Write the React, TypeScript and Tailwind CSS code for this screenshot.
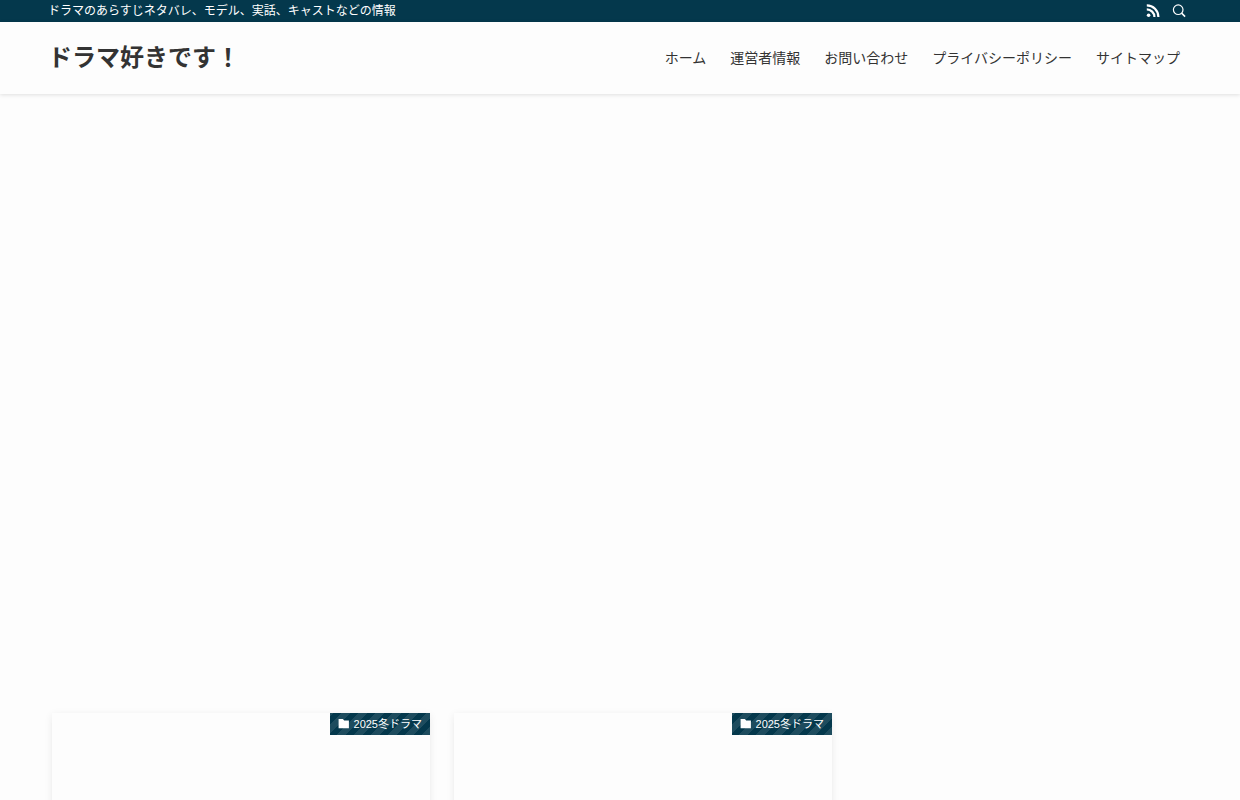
import React from 'react';

const NAV_ITEMS = ['ホーム', '運営者情報', 'お問い合わせ', 'プライバシーポリシー', 'サイトマップ'];

const POSTS = [
  { id: 1, category: '2025冬ドラマ' },
  { id: 2, category: '2025冬ドラマ' },
];

const RssIcon: React.FC = () => (
  <svg viewBox="0 0 14 14" className="w-3.5 h-3.5" fill="none" stroke="currentColor" strokeWidth="2.2" aria-hidden="true">
    <circle cx="2.6" cy="11.2" r="1.8" fill="currentColor" stroke="none" />
    <path d="M0.8 5.4a7.6 7.6 0 0 1 7.6 7.6" />
    <path d="M0.8 1.4a11.6 11.6 0 0 1 11.6 11.6" />
  </svg>
);

const SearchIcon: React.FC = () => (
  <svg viewBox="0 0 14 14" className="w-3.5 h-3.5" fill="none" stroke="currentColor" strokeWidth="1.2" aria-hidden="true">
    <circle cx="6.2" cy="5.7" r="4.8" />
    <path d="M9.6 9.1l3.5 3.5" strokeWidth="1.5" />
  </svg>
);

const FolderIcon: React.FC = () => (
  <svg viewBox="0 0 12 12" className="w-3 h-3" fill="currentColor" aria-hidden="true">
    <path d="M0.6 1h4.2l1.4 1.6h4.7v7.6H0.6z" />
  </svg>
);

const PostCard: React.FC<{ category: string }> = ({ category }) => (
  <li className="flex-1 h-80 shadow-[0_2px_8px_rgba(0,0,0,0.08),0_4px_8px_-4px_rgba(0,0,0,0.04)]">
    <a href="#" className="flex justify-end items-start h-full">
      <span className="flex items-center gap-1 h-[22px] px-2 text-[11px] text-white bg-[#04384c] bg-[repeating-linear-gradient(-45deg,rgba(255,255,255,0.1),rgba(255,255,255,0.1)_6px,transparent_6px,transparent_12px)]">
        <FolderIcon />
        {category}
      </span>
    </a>
  </li>
);

const App: React.FC = () => {
  return (
    <div className="h-screen overflow-hidden bg-[#fdfdfd] text-[#333] font-['Liberation_Sans','Noto_Sans_CJK_JP',sans-serif]">
      <div className="bg-[#04384c] text-white">
        <div className="flex items-center justify-between h-[22px] px-12">
          <p className="text-xs">ドラマのあらすじネタバレ、モデル、実話、キャストなどの情報</p>
          <div className="flex items-center gap-3 pr-1.5">
            <a href="#" aria-label="RSS"><RssIcon /></a>
            <button type="button" aria-label="検索"><SearchIcon /></button>
          </div>
        </div>
      </div>

      <header className="shadow-[0_1px_4px_rgba(0,0,0,0.12)]">
        <div className="flex items-center justify-between h-[72px] px-12">
          <h1 className="text-2xl font-bold">
            <a href="#">ドラマ好きです！</a>
          </h1>
          <nav>
            <ul className="flex text-sm">
              {NAV_ITEMS.map(item => (
                <li key={item}>
                  <a href="#" className="block px-3 whitespace-nowrap">{item}</a>
                </li>
              ))}
            </ul>
          </nav>
        </div>
      </header>

      <div className="flex gap-[52px] px-[52px] pt-[619px]">
        <main className="flex-1">
          <ul className="flex gap-6">
            {POSTS.map(post => (
              <PostCard key={post.id} category={post.category} />
            ))}
          </ul>
        </main>
        <aside className="w-[304px]" />
      </div>
    </div>
  );
};

export default App;
